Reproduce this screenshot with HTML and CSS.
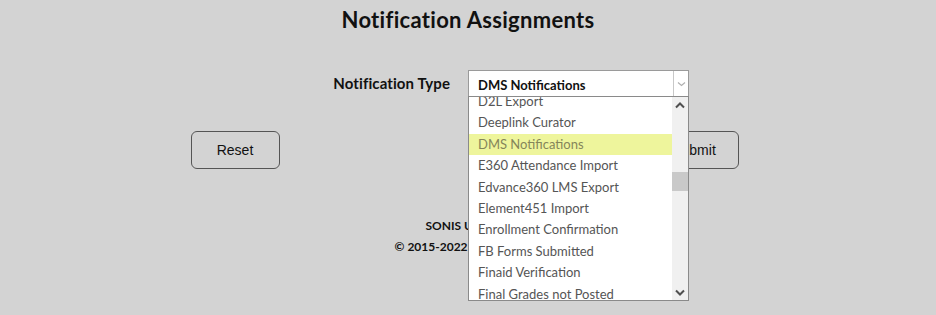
FILE: index.html
```html
<!DOCTYPE html>
<html lang="en">
<head>
    <meta charset="UTF-8">
    <title>Notification Assignments</title>
    <link rel="stylesheet" href="styles.css">
</head>
<body>
    <div class="page">
        <h1 class="title">Notification Assignments</h1>

        <form class="form" action="#" method="POST">
            <div class="form-row">
                <label class="label">Notification Type</label>
                <div class="field">
                    <div class="select">
                        <span class="select-value">DMS Notifications</span>
                        <span class="select-arrow">
                            <svg width="9" height="6" viewBox="0 0 9 6"><path d="M1 1.5 L4.5 4.5 L8 1.5" fill="none" stroke="#b0b0b0" stroke-width="1.2"/></svg>
                        </span>
                    </div>

                    <!-- open dropdown -->
                    <div class="dropdown">
                        <div class="options">
                            <ul class="options-list">
                                <li>D2L Export</li>
                                <li>Deeplink Curator</li>
                                <li class="selected">DMS Notifications</li>
                                <li>E360 Attendance Import</li>
                                <li>Edvance360 LMS Export</li>
                                <li>Element451 Import</li>
                                <li>Enrollment Confirmation</li>
                                <li>FB Forms Submitted</li>
                                <li>Finaid Verification</li>
                                <li>Final Grades not Posted</li>
                            </ul>
                        </div>
                        <div class="scrollbar">
                            <span class="scroll-btn">
                                <svg width="10" height="7" viewBox="0 0 10 7"><path d="M1 5.5 L5 1.5 L9 5.5" fill="none" stroke="#505050" stroke-width="2"/></svg>
                            </span>
                            <div class="scroll-track">
                                <div class="scroll-thumb"></div>
                            </div>
                            <span class="scroll-btn">
                                <svg width="10" height="7" viewBox="0 0 10 7"><path d="M1 1.5 L5 5.5 L9 1.5" fill="none" stroke="#505050" stroke-width="2"/></svg>
                            </span>
                        </div>
                    </div>
                </div>
            </div>

            <div class="buttons">
                <button type="reset">Reset</button>
                <button type="submit">Submit</button>
            </div>
        </form>

        <div class="footer">
            <p>SONIS Ultimate</p>
            <p>&copy; 2015-2022 Jenzabar, Inc.</p>
        </div>
    </div>
</body>
</html>
```

FILE: styles.css
```css
html, body {
    height: 100%;
}

body {
    margin: 0;
    background-color: #d3d3d3;
    font-family: Lato, "Open Sans", sans-serif;
    color: #111;
}

.page {
    width: 936px;
    min-height: 315px;
}

.title {
    margin: 0;
    padding-top: 7px;
    text-align: center;
    font-size: 22px;
    font-weight: bold;
    line-height: 26px;
    letter-spacing: 0.3px;
}

.form {
    margin-top: 37px;
}

.form-row {
    display: grid;
    grid-template-columns: 468px 1fr;
    align-items: start;
}

.label {
    justify-self: end;
    padding-right: 18px;
    padding-top: 4px;
    font-size: 15px;
    font-weight: bold;
    letter-spacing: 0.1px;
}

.field {
    position: relative;
}

.select {
    display: flex;
    width: 219px;
    height: 25px;
    border: 1px solid #9a9a9a;
    background-color: #fff;
}

.select-value {
    flex: 1;
    padding-left: 9px;
    padding-top: 6px;
    font-size: 13px;
    font-weight: bold;
    color: #111;
}

.select-arrow {
    display: flex;
    align-items: center;
    justify-content: center;
    width: 14px;
    border-left: 1px solid #c8c8c8;
}

.dropdown {
    position: absolute;
    top: 26px;
    left: 0;
    display: flex;
    width: 219px;
    height: 203px;
    border: 1px solid #8a8a8a;
    background-color: #fff;
    z-index: 2;
}

.options {
    flex: 1;
    overflow: hidden;
}

.options-list {
    list-style: none;
    margin: -6px 0 0 0;
    padding: 0;
}

.options-list li {
    height: 21.4px;
    line-height: 21.4px;
    padding-left: 9px;
    font-size: 13px;
    color: #555;
    white-space: nowrap;
}

.options-list li.selected {
    background-color: #eef59c;
    color: #85855a;
}

.scrollbar {
    display: flex;
    flex-direction: column;
    width: 16px;
    background-color: #f0f0f0;
}

.scroll-btn {
    display: flex;
    align-items: center;
    justify-content: center;
    height: 16px;
}

.scroll-track {
    flex: 1;
    padding-top: 59px;
}

.scroll-thumb {
    height: 19px;
    background-color: #c9c9c9;
}

.buttons {
    display: flex;
    justify-content: center;
    gap: 370px;
    margin-top: 34px;
    padding-right: 7px;
}

button {
    width: 89px;
    height: 38px;
    border: 1px solid #555;
    border-radius: 6px;
    background-color: #d3d3d3;
    font-family: "Liberation Sans", Arial, sans-serif;
    font-size: 14px;
    color: #111;
}

.footer {
    margin-top: 49px;
    text-align: center;
    font-size: 12px;
    font-weight: bold;
}

.footer p {
    margin: 0 0 5px 0;
    line-height: 16px;
}
```
